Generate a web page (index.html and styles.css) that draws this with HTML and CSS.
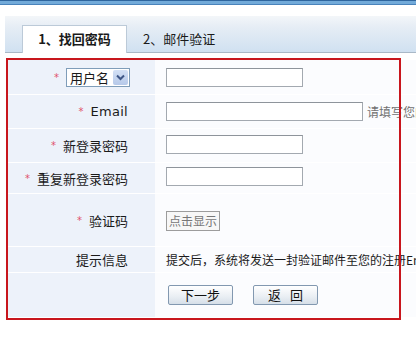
FILE: index.html
```html
<!DOCTYPE html>
<html lang="zh-CN">
<head>
<meta charset="utf-8">
<title>找回密码</title>
<link rel="stylesheet" href="styles.css">
</head>
<body>
<div class="page">
  <div class="topline"></div>
  <div class="tabbar">
    <div class="tab active">1、找回密码</div>
    <div class="tab">2、邮件验证</div>
  </div>
  <div class="form">
    <div class="lbl"><span class="req">*</span><span class="select">用户名<span class="arrow"><svg width="9" height="7" viewBox="0 0 9 7"><path d="M1 1.5 L4.5 5 L8 1.5" fill="none" stroke="#3f5787" stroke-width="2"/></svg></span></span></div>
    <div class="fld r1"><input class="inp" type="text"></div>

    <div class="lbl"><span class="req">*</span><span class="latin">Email</span></div>
    <div class="fld r2"><input class="inp wide" type="text"><span class="hint">请填写您的注册Email</span></div>

    <div class="lbl"><span class="req">*</span>新登录密码</div>
    <div class="fld r3"><input class="inp" type="password"></div>

    <div class="lbl"><span class="req">*</span>重复新登录密码</div>
    <div class="fld r4"><input class="inp" type="password"></div>

    <div class="lbl"><span class="req">*</span>验证码</div>
    <div class="fld"><span class="captcha">点击显示</span></div>

    <div class="lbl">提示信息</div>
    <div class="fld"><span class="info">提交后，系统将发送一封验证邮件至您的注册Email</span></div>

    <div class="lbl"></div>
    <div class="fld"><button class="btn first">下一步</button><button class="btn spaced">返 回</button></div>
  </div>
  <div class="highlight"></div>
</div>
</body>
</html>
```
FILE: styles.css
```css
html, body {
  margin: 0;
  padding: 0;
  background: #fff;
  overflow: hidden;
}
.page {
  position: relative;
  width: 416px;
  height: 343px;
  overflow: hidden;
  font-family: "Noto Sans CJK SC", "DejaVu Sans", sans-serif;
  color: #1a1a1a;
}
.topline {
  height: 3px;
  background: #72aad9;
  border-top: 1px solid #2f669e;
  border-bottom: 1px solid #4a83bb;
}
.tabbar {
  margin: 11px 0 0 5px;
  height: 36px;
  border-bottom: 1px solid #a9b8c7;
  background: linear-gradient(#f3f6f9, #e6edf5 30%, #d0e1f1);
  display: flex;
  align-items: flex-end;
  padding-left: 17px;
}
.tab {
  height: 27px;
  line-height: 26px;
  font-size: 13px;
  padding: 0 16px;
  color: #1a1a1a;
  margin-bottom: -1px;
}
.tab.active {
  background: #fff;
  border: 1px solid #bccad8;
  border-bottom: none;
  height: 28px;
  padding: 0 14px;
  font-weight: bold;
  width: 105px;
  box-sizing: border-box;
  text-align: center;
}
.form {
  margin: 7px 0 0 8px;
  width: 393px;
  display: grid;
  grid-template-columns: 147px 1fr;
  grid-template-rows: 34px 33px 33px 30px 52px 25px 44px;
  row-gap: 1px;
  background: #fff;
}
.lbl {
  background: #edf2fa;
  display: flex;
  justify-content: flex-end;
  align-items: center;
  padding-right: 27px;
  font-size: 13px;
  white-space: nowrap;
}
.fld {
  background: #fbfcfe;
  display: flex;
  align-items: center;
  padding-left: 11px;
  white-space: nowrap;
  font-size: 12px;
}
.fld.r3, .fld.r4 {
  padding-bottom: 3px;
}
.fld.r2 {
  padding-bottom: 1px;
}
.req {
  color: #e0506c;
  font-family: "DejaVu Sans", sans-serif;
  font-size: 10px;
  margin-right: 7px;
  line-height: 1;
  padding-top: 1px;
}
.latin {
  font-family: "DejaVu Sans", sans-serif;
  font-size: 13px;
  letter-spacing: 0.3px;
}
.select {
  display: inline-flex;
  align-items: center;
  justify-content: space-between;
  width: 64px;
  height: 19px;
  box-sizing: border-box;
  border: 1px solid #7f9db9;
  background: #fff;
  padding-left: 3px;
  padding-right: 1px;
  font-size: 13px;
  margin-right: -2px;
}
.arrow {
  width: 15px;
  height: 15px;
  background: linear-gradient(#d3e0f5, #b6c9e9);
  border-radius: 2px;
  display: flex;
  align-items: center;
  justify-content: center;
}
.inp {
  width: 137px;
  height: 19px;
  box-sizing: border-box;
  border: 1px solid #a3a9b0;
  border-top-color: #8e949b;
  background: #fff;
  padding: 0;
  margin: 0;
  outline: none;
}
.inp.wide {
  width: 197px;
}
.hint {
  margin-left: 4px;
  color: #707070;
  font-size: 12px;
}
.captcha {
  display: inline-block;
  width: 54px;
  height: 20px;
  line-height: 18px;
  box-sizing: border-box;
  border: 1px solid #9c9c9c;
  background: #f7f7f7;
  color: #777;
  font-size: 12px;
  text-align: center;
  margin-top: 1px;
}
.info {
  color: #1a1a1a;
  font-size: 12px;
}
.btn {
  width: 65px;
  height: 20px;
  box-sizing: border-box;
  border: 1px solid #8298b0;
  border-radius: 2px;
  background: linear-gradient(#ffffff, #e9eef3 60%, #d6dfe8);
  font-family: "Noto Sans CJK SC", sans-serif;
  font-size: 13px;
  color: #111;
  padding: 0;
  line-height: 18px;
  margin-left: 20px;
}
.btn.first {
  margin-left: 2px;
}
.btn.spaced {
  word-spacing: 6px;
}
.highlight {
  position: absolute;
  left: 6px;
  top: 58px;
  width: 395px;
  height: 262px;
  box-sizing: border-box;
  border: 2px solid #c8161d;
  pointer-events: none;
}
```
